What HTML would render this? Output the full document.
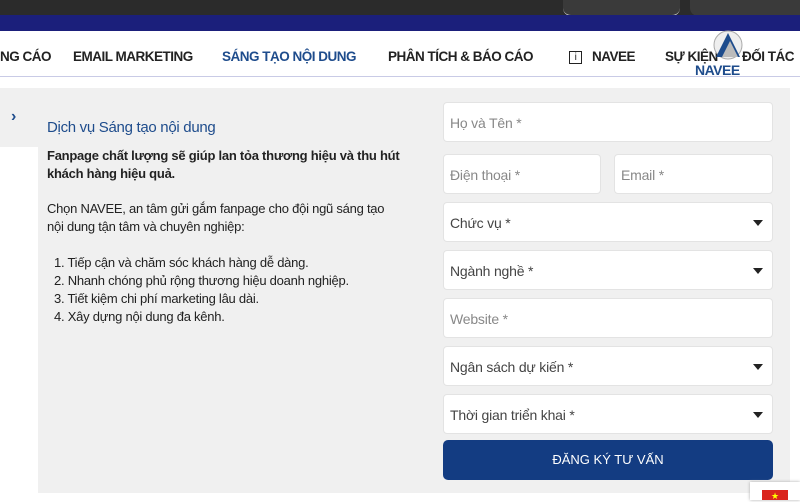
<!DOCTYPE html>
<html><head><meta charset="utf-8"><style>
*{margin:0;padding:0;box-sizing:border-box}
body{width:800px;height:500px;overflow:hidden;background:#fff;font-family:"Liberation Sans",sans-serif;position:relative}
.a{position:absolute}
.nav{top:31px;left:0;width:800px;height:46px;background:#fff;border-bottom:1px solid #c9cbe6}
.nav span{position:absolute;top:18px;font-size:13.5px;color:#222;font-weight:bold;letter-spacing:-0.5px}
.in{position:absolute;background:#fff;border:1px solid #e3e3e3;border-radius:4px;height:40px;font-size:14px;color:#888;padding:12px 6px;letter-spacing:-0.2px}
.sel{color:#444}
.sel:after{content:"";position:absolute;right:9px;top:17px;border-left:5px solid transparent;border-right:5px solid transparent;border-top:6px solid #222}
p{font-size:13px;color:#222;line-height:18px;letter-spacing:-0.25px}
</style></head><body>
<div class="a" style="top:0;left:0;width:800px;height:15px;background:#2b2b2b"></div>
<div class="a" style="top:0;left:563px;width:117px;height:16px;background:#3a3a3a;border-radius:0 0 8px 8px;border-bottom:1px solid #ddd"></div>
<div class="a" style="top:0;left:690px;width:110px;height:16px;background:#3a3a3a;border-radius:0 0 0 8px"></div>
<div class="a" style="top:15px;left:0;width:800px;height:16px;background:#1b1f7b"></div>
<div class="a nav">
<span style="left:0">NG CÁO</span>
<span style="left:73px">EMAIL MARKETING</span>
<span style="left:222px;color:#1e4c8c">SÁNG TẠO NỘI DUNG</span>
<span style="left:388px">PHÂN TÍCH &amp; BÁO CÁO</span>
<span style="left:569px;top:20px;width:13px;height:13px;border:1px solid #222;font-size:10px;text-align:center;line-height:11px;font-weight:normal">i</span>
<span style="left:592px">NAVEE</span>
<span style="left:665px">SỰ KIỆN</span>
<span style="left:742px">ĐỐI TÁC</span>
<svg class="a" style="left:708px;top:-4px" width="40" height="36" viewBox="0 0 40 36"><circle cx="20" cy="18" r="14" fill="#eee" stroke="#aaa"/><path d="M8 30 L20 6 L32 30Z" fill="#1e4c8c"/><path d="M14 30 L22 14 L30 30Z" fill="#bbb"/></svg>
<span style="left:695px;top:31px;font-weight:bold;color:#1e4c8c;font-size:14px">NAVEE</span>
</div>
<div class="a" style="top:88px;left:0;width:790px;height:59px;background:#f0f0f0"></div>
<div class="a" style="top:88px;left:38px;width:752px;height:405px;background:#f0f0f0"></div>
<div class="a" style="top:108px;left:11px;font-size:16px;color:#1e4c8c;font-weight:bold">›</div>
<div class="a" style="top:119px;left:47px;font-size:15px;color:#1e4c8c;letter-spacing:-0.3px">Dịch vụ Sáng tạo nội dung</div>
<div class="a" style="top:147px;left:47px;width:357px">
<p style="font-weight:bold">Fanpage chất lượng sẽ giúp lan tỏa thương hiệu và thu hút khách hàng hiệu quả.</p>
<p style="margin-top:17px">Chọn NAVEE, an tâm gửi gắm fanpage cho đội ngũ sáng tạo nội dung tận tâm và chuyên nghiệp:</p>
<p style="margin-top:18px;padding-left:7px">1. Tiếp cận và chăm sóc khách hàng dễ dàng.<br>2. Nhanh chóng phủ rộng thương hiệu doanh nghiệp.<br>3. Tiết kiệm chi phí marketing lâu dài.<br>4. Xây dựng nội dung đa kênh.</p>
</div>
<div class="in" style="left:443px;top:102px;width:330px">Họ và Tên *</div>
<div class="in" style="left:443px;top:154px;width:158px">Điện thoại *</div>
<div class="in" style="left:614px;top:154px;width:159px">Email *</div>
<div class="in sel" style="left:443px;top:202px;width:330px">Chức vụ *</div>
<div class="in sel" style="left:443px;top:250px;width:330px">Ngành nghề *</div>
<div class="in" style="left:443px;top:298px;width:330px">Website *</div>
<div class="in sel" style="left:443px;top:346px;width:330px">Ngân sách dự kiến *</div>
<div class="in sel" style="left:443px;top:394px;width:330px">Thời gian triển khai *</div>
<div class="a" style="left:443px;top:440px;width:330px;height:40px;background:#133c82;border-radius:5px;color:#fff;font-size:13px;text-align:center;line-height:40px">ĐĂNG KÝ TƯ VẤN</div>
<div class="a" style="left:750px;top:482px;width:50px;height:18px;background:#fff;box-shadow:0 0 3px #aaa"></div>
<div class="a" style="left:762px;top:490px;width:26px;height:10px;background:#da251d;color:#ff0;font-size:9px;text-align:center;line-height:12px">★</div>
</body></html>
